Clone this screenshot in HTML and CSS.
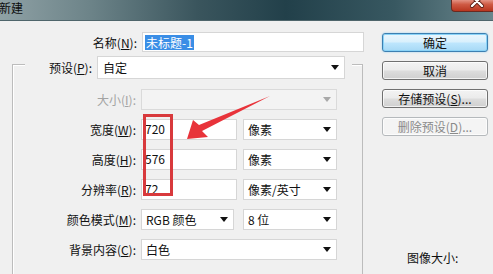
FILE: index.html
```html
<!DOCTYPE html>
<html lang="zh-CN">
<head>
    <meta charset="UTF-8">
    <title>新建</title>
    <link rel="stylesheet" href="styles.css">
</head>
<body>
    <div class="titlebar">
        <span class="title">新建</span>
        <span class="close">
            <svg width="41" height="12" viewBox="0 0 41 12">
                <path d="M20 -3 L30 7 M30 -3 L20 7" stroke="#5a1a10" stroke-width="4" stroke-linecap="round"/>
                <path d="M20 -3 L30 7 M30 -3 L20 7" stroke="#ffffff" stroke-width="2.4" stroke-linecap="round"/>
            </svg>
        </span>
    </div>

    <div class="dialog">
        <div class="form">
            <!-- 名称 -->
            <div class="row name-row">
                <label class="lbl">名称(<u>N</u>):</label>
                <div class="field name-field"><span class="selected">未标题-1</span></div>
            </div>

            <!-- 预设 + 分组框 -->
            <div class="group">
                <div class="row preset-row">
                    <label class="lbl preset-lbl">预设(<u>P</u>):</label>
                    <div class="field select preset-sel">自定<i class="caret"></i></div>
                </div>

                <div class="rows">
                    <div class="row">
                        <label class="lbl off">大小(<u>I</u>):</label>
                        <div class="field select off full"><i class="caret"></i></div>
                    </div>
                    <div class="row">
                        <label class="lbl">宽度(<u>W</u>):</label>
                        <div class="field num">720</div>
                        <div class="field select unit">像素<i class="caret"></i></div>
                    </div>
                    <div class="row">
                        <label class="lbl">高度(<u>H</u>):</label>
                        <div class="field num">576</div>
                        <div class="field select unit">像素<i class="caret"></i></div>
                    </div>
                    <div class="row">
                        <label class="lbl">分辨率(<u>R</u>):</label>
                        <div class="field num">72</div>
                        <div class="field select unit">像素/英寸<i class="caret"></i></div>
                    </div>
                    <div class="row">
                        <label class="lbl">颜色模式(<u>M</u>):</label>
                        <div class="field select mode">RGB 颜色<i class="caret"></i></div>
                        <div class="field select bits">8 位<i class="caret"></i></div>
                    </div>
                    <div class="row">
                        <label class="lbl">背景内容(<u>C</u>):</label>
                        <div class="field select full">白色<i class="caret"></i></div>
                    </div>
                </div>
            </div>
        </div>

        <div class="side">
            <button class="btn default">确定</button>
            <button class="btn">取消</button>
            <button class="btn">存储预设(<u>S</u>)...</button>
            <button class="btn" disabled>删除预设(<u>D</u>)...</button>
            <div class="info">图像大小:</div>
        </div>
    </div>

    <!-- 标注 -->
    <div class="mark"></div>
    <svg class="arrow" width="493" height="274" viewBox="0 0 493 274">
        <polygon points="187,139 193,120 199,125 270,96 202,131 208,137" fill="#e8333a"/>
    </svg>
</body>
</html>
```

FILE: styles.css
```css
body {
    margin: 0;
    width: 493px;
    height: 274px;
    overflow: hidden;
    background-color: #f0f0f0;
    font-family: "Noto Sans CJK SC", "Noto Sans", sans-serif;
    font-size: 12px;
    color: #111;
    position: relative;
}
u {
    text-decoration: underline;
    text-underline-offset: 1px;
}
/* Titulek okna */
.titlebar {
    height: 20px;
    display: flex;
    justify-content: space-between;
    align-items: flex-start;
    background: linear-gradient(to right, #8fa1a5 0%, #6d8489 18%, #3a555d 40%, #22404a 58%, #385861 80%, #6a868c 100%);
    border-bottom: 1px solid #4e656b;
}
.title {
    margin-left: -1px;
    line-height: 15px;
    color: #0d0d0d;
}
.close {
    width: 41px;
    height: 12px;
    margin-top: -1px;
    border: 1px solid #6a2a20;
    border-top: none;
    border-right: none;
    border-radius: 0 0 0 4px;
    background: linear-gradient(to bottom, #e8a093 0%, #cf5a44 45%, #b8361f 100%);
    overflow: hidden;
}
.close svg {
    display: block;
}
/* Obsah dialogu */
.dialog {
    display: flex;
    height: 253px;
}
.form {
    width: 365px;
    padding-top: 11px;
}
.row {
    display: flex;
    align-items: center;
    height: 21px;
}
.lbl {
    flex: none;
    text-align: right;
    margin-right: 5px;
    white-space: nowrap;
}
.lbl.off {
    color: #a3a3a3;
}
.name-row {
    height: 20px;
}
.name-row .lbl {
    width: 137px;
}
.field {
    box-sizing: border-box;
    height: 100%;
    display: flex;
    align-items: center;
    background-color: #ffffff;
    border: 1px solid #d6d6d6;
    padding-left: 4px;
    white-space: nowrap;
}
.name-field {
    width: 222px;
    padding-left: 2px;
}
.selected {
    background-color: #3a8ee6;
    color: #ffffff;
    padding: 0 1px;
    line-height: 15px;
}
.caret {
    margin-left: auto;
    margin-right: 5px;
    width: 0;
    height: 0;
    border-left: 4px solid transparent;
    border-right: 4px solid transparent;
    border-top: 5px solid #111;
}
.field.off {
    background-color: #f3f3f3;
    border-color: #dadada;
}
.field.off .caret {
    border-top-color: #a9a9a9;
}
/* Skupina */
.group {
    box-sizing: border-box;
    width: 351px;
    height: 210px;
    margin: 12px 0 0 12px;
    border: 1px solid #bcbcbc;
    border-bottom: none;
    box-shadow: inset 1px 1px 0 #ffffff;
}
.preset-row {
    box-sizing: border-box;
    width: 327px;
    height: 23px;
    margin: -9px 0 0 12px;
    padding-right: 7px;
    background-color: #f0f0f0;
}
.preset-lbl {
    width: 67px;
}
.preset-sel {
    width: 248px;
    padding-left: 5px;
}
.rows {
    display: flex;
    flex-direction: column;
    gap: 9px;
    margin-top: 10px;
}
.rows .lbl {
    width: 123px;
}
.full {
    width: 196px;
}
.num {
    width: 96px;
    padding-left: 3px;
    padding-bottom: 2px;
}
.unit {
    width: 94px;
    margin-left: 6px;
}
.mode {
    width: 93px;
}
.bits {
    width: 94px;
    margin-left: 9px;
}
/* Tlačítka */
.side {
    display: flex;
    flex-direction: column;
    width: 106px;
    margin-left: 17px;
    padding-top: 12px;
}
.btn {
    height: 19px;
    margin-bottom: 9px;
    padding: 0;
    font: inherit;
    color: #111;
    border: 1px solid #707070;
    border-radius: 3px;
    background: linear-gradient(to bottom, #f3f3f3 0%, #ebebeb 48%, #dddddd 52%, #cfcfcf 100%);
    box-shadow: inset 0 0 0 1px rgba(255, 255, 255, 0.7);
    line-height: 15px;
}
.btn.default {
    border-color: #3c7fb1;
    background: linear-gradient(to bottom, #eaf6fd 0%, #d9f0fc 48%, #bee6fd 52%, #a7d9f5 100%);
    box-shadow: inset 0 0 0 1px #8ad3f7, 0 0 2px #8fcdef;
}
.btn:disabled {
    color: #8a8a8a;
    border-color: #b5b9bc;
    background: #f4f4f4;
}
.info {
    margin-top: 105px;
    padding-left: 25px;
    line-height: 16px;
}
/* Červené zvýraznění */
.mark {
    position: absolute;
    left: 143px;
    top: 114px;
    width: 30px;
    height: 82px;
    box-sizing: border-box;
    border: 3px solid #d8393c;
}
.arrow {
    position: absolute;
    left: 0;
    top: 0;
    pointer-events: none;
}
```
